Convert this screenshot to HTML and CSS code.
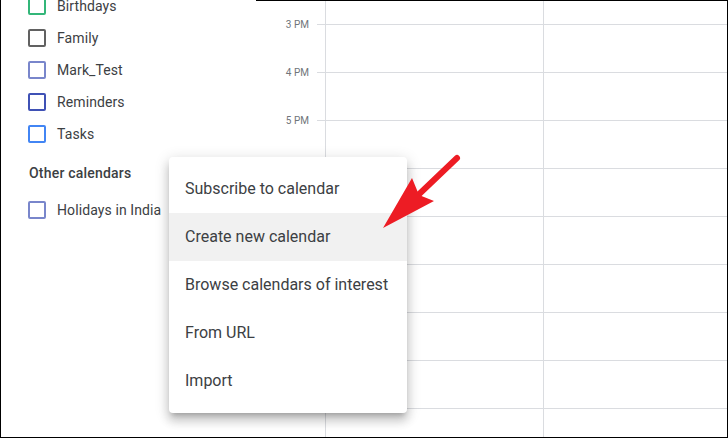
FILE: index.html
```html
<!DOCTYPE html>
<html>
<head>
<meta charset="utf-8">
<link rel="stylesheet" href="styles.css">
</head>
<body>
<div class="frame">
  <aside class="sidebar">
    <ul class="cal-list">
      <li class="cal-item"><span class="cb cb-green"></span><span>Birthdays</span></li>
      <li class="cal-item"><span class="cb cb-gray"></span><span>Family</span></li>
      <li class="cal-item"><span class="cb cb-lavender"></span><span>Mark_Test</span></li>
      <li class="cal-item"><span class="cb cb-indigo"></span><span>Reminders</span></li>
      <li class="cal-item"><span class="cb cb-blue"></span><span>Tasks</span></li>
    </ul>
    <div class="section-title">Other calendars</div>
    <ul class="cal-list">
      <li class="cal-item"><span class="cb cb-lavender"></span><span>Holidays in India</span></li>
    </ul>
  </aside>
  <main class="main">
    <div class="gutter">
      <div class="hour">3 PM</div>
      <div class="hour">4 PM</div>
      <div class="hour">5 PM</div>
      <div class="hour">6 PM</div>
      <div class="hour">7 PM</div>
      <div class="hour">8 PM</div>
      <div class="hour">9 PM</div>
      <div class="hour">10 PM</div>
      <div class="hour">11 PM</div>
    </div>
    <div class="grid">
      <div class="tick"></div>
      <div class="day day-first"></div>
      <div class="day day-rest"></div>
    </div>
  </main>

  <div class="menu">
    <div class="menu-item">Subscribe to calendar</div>
    <div class="menu-item active">Create new calendar</div>
    <div class="menu-item">Browse calendars of interest</div>
    <div class="menu-item">From URL</div>
    <div class="menu-item">Import</div>
  </div>

  <svg class="arrow" width="728" height="438" viewBox="0 0 728 438">
    <line x1="457" y1="158" x2="414" y2="199" stroke="#ed1c24" stroke-width="6" stroke-linecap="round"/>
    <polygon points="383,228 412,178 419,195 434,201" fill="#ed1c24"/>
  </svg>
</div>
</body>
</html>
```

FILE: styles.css
```css
* { box-sizing: border-box; }
html, body { margin: 0; padding: 0; background: #fff; }
body { font-family: Roboto, "Noto Sans", Arial, sans-serif; }

.frame {
  position: relative;
  width: 728px;
  height: 438px;
  border-left: 1px solid #000;
  border-right: 1px solid #000;
  border-bottom: 1px solid #000;
  display: flex;
  overflow: hidden;
}

.sidebar {
  width: 255px;
  flex: none;
  color: #3c4043;
  font-size: 14px;
}
.cal-list { list-style: none; margin: 0; padding: 0; }
.cal-list:first-child { margin-top: -10px; }
.cal-item {
  height: 32px;
  display: flex;
  align-items: center;
  padding-left: 27px;
  gap: 11px;
  letter-spacing: 0.1px;
}
.cb {
  width: 18px;
  height: 18px;
  border: 2px solid;
  border-radius: 2px;
  flex: none;
}
.cb-green { border-color: #33b679; }
.cb-gray { border-color: #616161; }
.cb-lavender { border-color: #7986cb; }
.cb-indigo { border-color: #3f51b5; }
.cb-blue { border-color: #4285f4; }

.section-title {
  height: 44px;
  line-height: 46px;
  padding-left: 28px;
  font-weight: 500;
  letter-spacing: 0.2px;
}

.main {
  flex: 1;
  display: flex;
  border-top: 1px solid #000;
}
.gutter {
  width: 61px;
  flex: none;
  padding-right: 8px;
  text-align: right;
  color: #70757a;
  font-size: 10px;
}
.hour { height: 48px; line-height: 48px; }

.grid {
  flex: 1;
  display: flex;
  background-image: linear-gradient(to bottom, #dadce0 1px, transparent 1px);
  background-size: 100% 48px;
  background-position: 0 23px;
  background-repeat: repeat-y;
}
.tick { width: 8px; flex: none; }
.day { border-left: 1px solid #dadce0; }
.day-first { width: 218px; flex: none; }
.day-rest { flex: 1; }

.menu {
  position: absolute;
  left: 168px;
  top: 157px;
  width: 238px;
  padding: 8px 0;
  background: #fff;
  border-radius: 4px;
  box-shadow: 0 5px 5px -3px rgba(0,0,0,.2), 0 8px 10px 1px rgba(0,0,0,.14), 0 3px 14px 2px rgba(0,0,0,.12);
  z-index: 2;
}
.menu-item {
  height: 48px;
  line-height: 48px;
  padding-left: 16px;
  font-size: 16px;
  color: #3c4043;
  white-space: nowrap;
}
.menu-item.active { background: #f1f1f1; }

.arrow {
  position: absolute;
  left: -1px;
  top: 0;
  z-index: 3;
  pointer-events: none;
}
```
